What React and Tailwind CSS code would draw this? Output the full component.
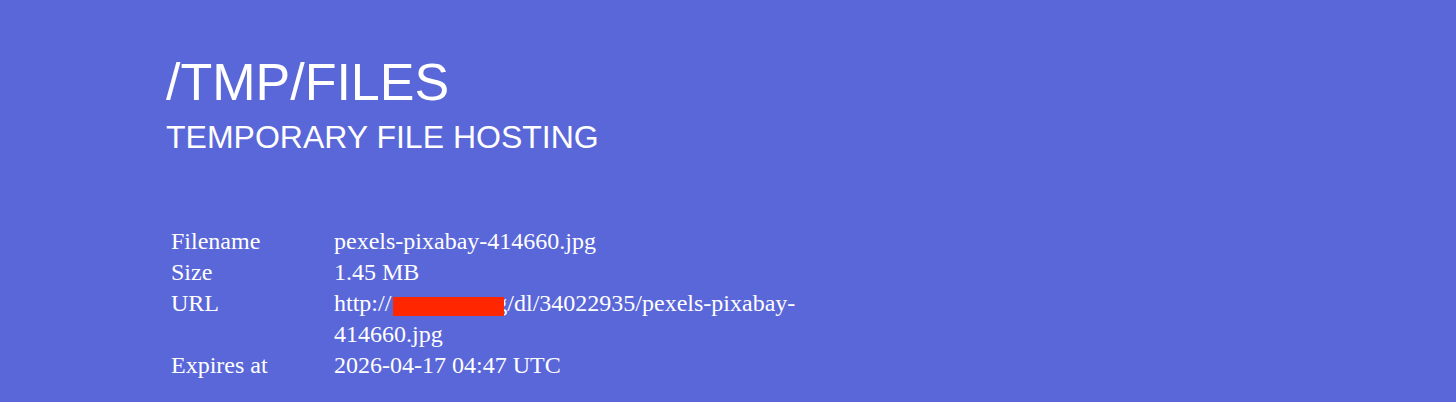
export default function App() {
  const rows = [
    { label: 'Filename', value: 'pexels-pixabay-414660.jpg' },
    { label: 'Size', value: '1.45 MB' },
    { label: 'URL', value: 'url' },
    { label: 'Expires at', value: '2026-04-17 04:47 UTC' },
  ];

  return (
    <div className="min-h-[402px] w-full bg-[#5a67d8] text-white pl-[166px] pt-[52px]">
      <header className="font-['Liberation_Sans',Arial,sans-serif]">
        <h1 className="text-[52px] leading-[60px]">/TMP/FILES</h1>
        <h2 className="mt-[7px] text-[32px] leading-[37px]">TEMPORARY FILE HOSTING</h2>
      </header>

      <div className="mt-[70px] ml-[5px] grid grid-cols-[163px_470px] font-['Liberation_Serif','Times_New_Roman',serif] text-[24px] leading-[31px]">
        {rows.map((r) => (
          <div key={r.label} className="contents">
            <div>{r.label}</div>
            <div>
              {r.value === 'url' ? (
                <>
                  http://
                  {/* redacted host */}
                  <span className="relative z-10 inline-block w-[111px] h-[19px] ml-[2px] align-[-5px] bg-[#ff2600]" />
                  <span className="ml-[-9px]">g</span>/dl/34022935/pexels-pixabay-414660.jpg
                </>
              ) : (
                r.value
              )}
            </div>
          </div>
        ))}
      </div>
    </div>
  );
}
